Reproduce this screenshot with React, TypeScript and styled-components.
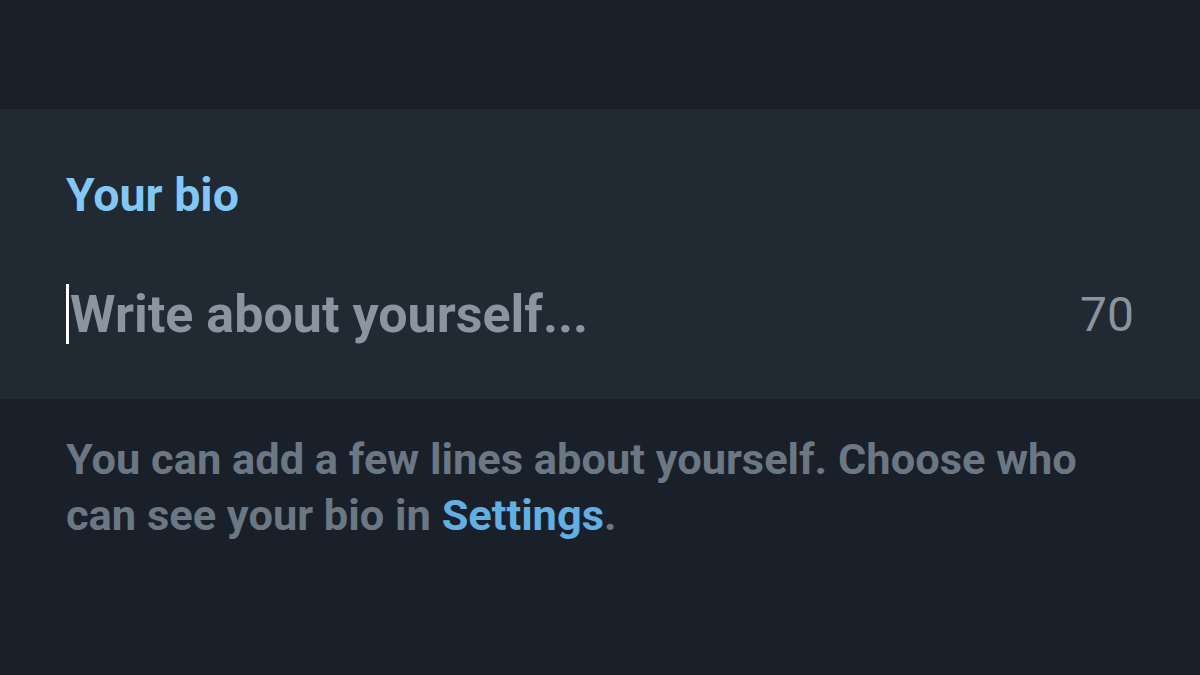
import React from "react";
import styled, { createGlobalStyle } from "styled-components";

const Global = createGlobalStyle`
  html, body { margin: 0; padding: 0; background: #19202a; }
  body { font-family: Roboto, "Noto Sans", sans-serif; width: 1200px; height: 675px; overflow: hidden; }
`;

const Page = styled.div`
  display: flex;
  flex-direction: column;
  width: 1200px;
  height: 675px;
  background: #19202a;
`;

const TopBar = styled.div`
  height: 109px;
  flex: none;
`;

const Panel = styled.section`
  height: 290px;
  box-sizing: border-box;
  background: #212933;
  padding: 0 66px;
  display: flex;
  flex-direction: column;
`;

const Title = styled.h2`
  margin: 0;
  padding-top: 56px;
  font-size: 46.5px;
  line-height: 60px;
  font-weight: 700;
  color: #83c7f2;
`;

const InputRow = styled.div`
  margin-top: 58px;
  display: flex;
  align-items: center;
  height: 62px;
`;

const Cursor = styled.span`
  width: 3px;
  height: 60px;
  background: #ffffff;
  flex: none;
`;

const Placeholder = styled.span`
  flex: 1;
  font-size: 52px;
  font-weight: 700;
  color: #8a95a1;
  margin-left: 1px;
  white-space: nowrap;
`;

const Counter = styled.span`
  font-size: 48px;
  font-weight: 400;
  color: #8a949f;
`;

const Footer = styled.p`
  margin: 0;
  padding: 33px 66px 0;
  font-size: 43.4px;
  line-height: 56px;
  font-weight: 700;
  color: #6c7784;
`;

const Link = styled.span`
  color: #63afe1;
`;

export default function App() {
  return (
    <Page>
      <Global />
      <TopBar />
      <Panel>
        <Title>Your bio</Title>
        <InputRow>
          <Cursor />
          <Placeholder>Write about yourself...</Placeholder>
          <Counter>70</Counter>
        </InputRow>
      </Panel>
      <Footer>
        You can add a few lines about yourself. Choose who can see your bio in <Link>Settings</Link>.
      </Footer>
    </Page>
  );
}
